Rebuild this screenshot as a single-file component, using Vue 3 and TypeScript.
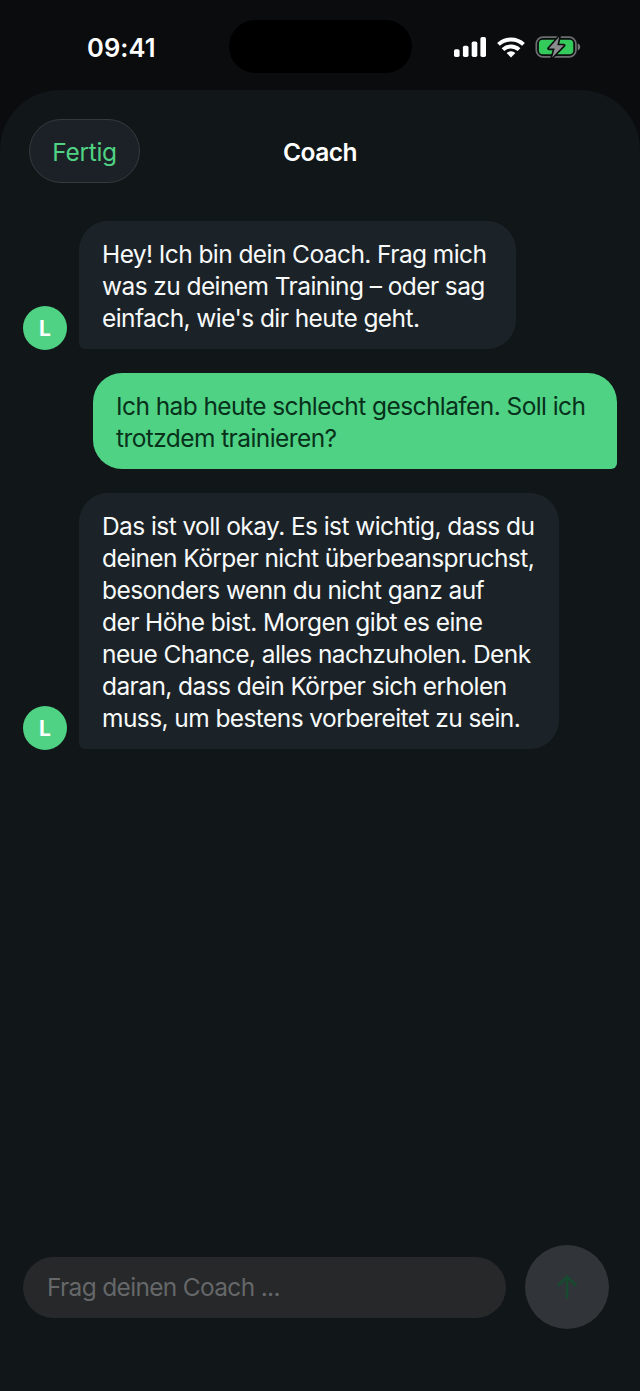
<script setup lang="ts">
import { ref } from 'vue'

interface Message {
  id: number
  from: 'coach' | 'user'
  lines: string[]
}

const messages = ref<Message[]>([
  {
    id: 1,
    from: 'coach',
    lines: ['Hey! Ich bin dein Coach. Frag mich', 'was zu deinem Training – oder sag', "einfach, wie's dir heute geht."],
  },
  {
    id: 2,
    from: 'user',
    lines: ['Ich hab heute schlecht geschlafen. Soll ich', 'trotzdem trainieren?'],
  },
  {
    id: 3,
    from: 'coach',
    lines: [
      'Das ist voll okay. Es ist wichtig, dass du',
      'deinen Körper nicht überbeanspruchst,',
      'besonders wenn du nicht ganz auf',
      'der Höhe bist. Morgen gibt es eine',
      'neue Chance, alles nachzuholen. Denk',
      'daran, dass dein Körper sich erholen',
      'muss, um bestens vorbereitet zu sein.',
    ],
  },
])
</script>

<template>
  <div class="screen">
    <header class="status">
      <div class="time">09:41</div>
      <div class="island"></div>
      <div class="indicators">
        <svg class="signal" width="32" height="20" viewBox="0 0 32 20" fill="#fff">
          <rect x="0" y="12.2" width="5.6" height="7.8" rx="1.7" />
          <rect x="8.9" y="8.7" width="5.6" height="11.3" rx="1.7" />
          <rect x="17.7" y="4.5" width="5.6" height="15.5" rx="1.7" />
          <rect x="26.4" y="0" width="5.6" height="20" rx="1.7" />
        </svg>
        <svg class="wifi" width="28" height="21" viewBox="0 0 28 21">
          <g fill="none" stroke="#fff" stroke-width="4">
            <path d="M1.5 7.4a18.2 18.2 0 0 1 25 0" />
            <path d="M6 12.6a11.6 11.6 0 0 1 16 0" />
          </g>
          <path d="M14 20.5l-4.4-4.4a6.4 6.4 0 0 1 8.8 0z" fill="#fff" />
        </svg>
        <svg class="battery" width="46" height="24" viewBox="0 0 46 24">
          <rect x="1.3" y="2.2" width="39.6" height="19.7" rx="6.6" fill="none" stroke="#6b6d6f" stroke-width="1.7" />
          <path d="M42.7 8.6c3.3 1 3.3 5.9 0 6.9z" fill="#737577" />
          <rect x="3.9" y="4.8" width="34.4" height="14.5" rx="4" fill="#35cb5c" />
          <path d="M24.2 1.8L13.8 13.6h5.9l-2.6 8.8 11.8-12.1h-6.6z" fill="#8a8c8e" stroke="#0a0d0e" stroke-width="3.2" stroke-linejoin="round" paint-order="stroke" />
        </svg>
      </div>
    </header>

    <main class="sheet">
      <nav class="bar">
        <button class="done" type="button">Fertig</button>
        <h1 class="title">Coach</h1>
      </nav>

      <section class="thread">
        <div v-for="m in messages" :key="m.id" class="row" :class="m.from">
          <div v-if="m.from === 'coach'" class="avatar">L</div>
          <div class="bubble">
            <div v-for="line in m.lines" :key="line" class="line">{{ line }}</div>
          </div>
        </div>
      </section>

      <footer class="composer">
        <div class="field">Frag deinen Coach ...</div>
        <button class="send" type="button" aria-label="Senden">
          <svg class="arrow" width="20" height="26" viewBox="0 0 20 26" fill="none" stroke="#174a2f" stroke-width="2.7" stroke-linecap="round" stroke-linejoin="round">
            <path d="M10 23.6V2.6M1.6 11L10 2.6L18.4 11" />
          </svg>
        </button>
      </footer>
    </main>
  </div>
</template>

<style>
body {
  margin: 0;
  background: #0a0c0e;
}
</style>

<style scoped>
.screen {
  box-sizing: border-box;
  width: 640px;
  height: 1391px;
  display: flex;
  flex-direction: column;
  overflow: hidden;
  background: #0a0c0e;
  color: #f8fafa;
  font-family: Inter, 'Liberation Sans', sans-serif;
  font-size: 24.5px;
}
.status {
  box-sizing: border-box;
  height: 90px;
  flex: none;
  padding-top: 20px;
  display: grid;
  grid-template-columns: 229px 183px 1fr;
}
.time {
  padding-left: 87px;
  height: 54px;
  line-height: 56px;
  font-size: 25.5px;
  font-weight: 600;
  letter-spacing: 0.1px;
  color: #fff;
}
.island {
  height: 53px;
  border-radius: 27px;
  background: #000;
}
.indicators {
  display: flex;
  align-items: center;
  height: 54px;
  padding-left: 42px;
}
.wifi {
  margin-left: 11px;
}
.battery {
  margin-left: 10px;
}
.sheet {
  box-sizing: border-box;
  flex: 1;
  display: flex;
  flex-direction: column;
  border-radius: 60px 60px 0 0;
  background: #111618;
}
.bar {
  display: grid;
  grid-template-columns: 1fr auto 1fr;
  align-items: center;
  height: 64px;
  margin: 29px 29px 0;
}
.done {
  box-sizing: border-box;
  width: 111px;
  height: 64px;
  padding: 2px 0 0;
  border: 1.5px solid #343a3e;
  border-radius: 32px;
  background: #1c2127;
  color: #50d285;
  font: inherit;
  letter-spacing: -0.3px;
}
.title {
  margin: 0;
  padding-top: 2px;
  font-size: 24.5px;
  font-weight: 600;
  letter-spacing: -0.55px;
  color: #fff;
}
.thread {
  flex: 1;
  display: flex;
  flex-direction: column;
  gap: 24px;
  padding: 38px 23px 0;
}
.row {
  display: flex;
  align-items: flex-end;
  gap: 12px;
}
.row.user {
  justify-content: flex-end;
}
.avatar {
  width: 44px;
  height: 44px;
  flex: none;
  margin-bottom: -1px;
  border-radius: 50%;
  background: #50d285;
  color: #fff;
  font-size: 21px;
  font-weight: 700;
  line-height: 45px;
  text-align: center;
}
.bubble {
  box-sizing: border-box;
  padding: 17px 0 15px 23px;
  border-radius: 29px 29px 29px 6px;
  background: #1c2328;
}
.coach .bubble {
  width: 437px;
}
.coach:last-child .bubble {
  width: 480px;
}
.user .bubble {
  width: 524px;
  border-radius: 29px 29px 6px 29px;
  background: #50d285;
  color: #07311a;
}
.line {
  height: 32px;
  line-height: 32px;
  white-space: pre;
  letter-spacing: -0.58px;
}
.composer {
  display: flex;
  align-items: center;
  gap: 19px;
  height: 84px;
  margin: 0 31px 62px 23px;
}
.field {
  flex: 1;
  height: 61px;
  padding-left: 24px;
  border-radius: 31px;
  background: #262829;
  color: #656769;
  line-height: 60px;
  letter-spacing: -0.68px;
}
.send {
  width: 84px;
  height: 84px;
  padding: 0;
  border: 0;
  border-radius: 50%;
  background: #313439;
  display: flex;
  align-items: center;
  justify-content: center;
}
.arrow {
  flex: none;
}
</style>
